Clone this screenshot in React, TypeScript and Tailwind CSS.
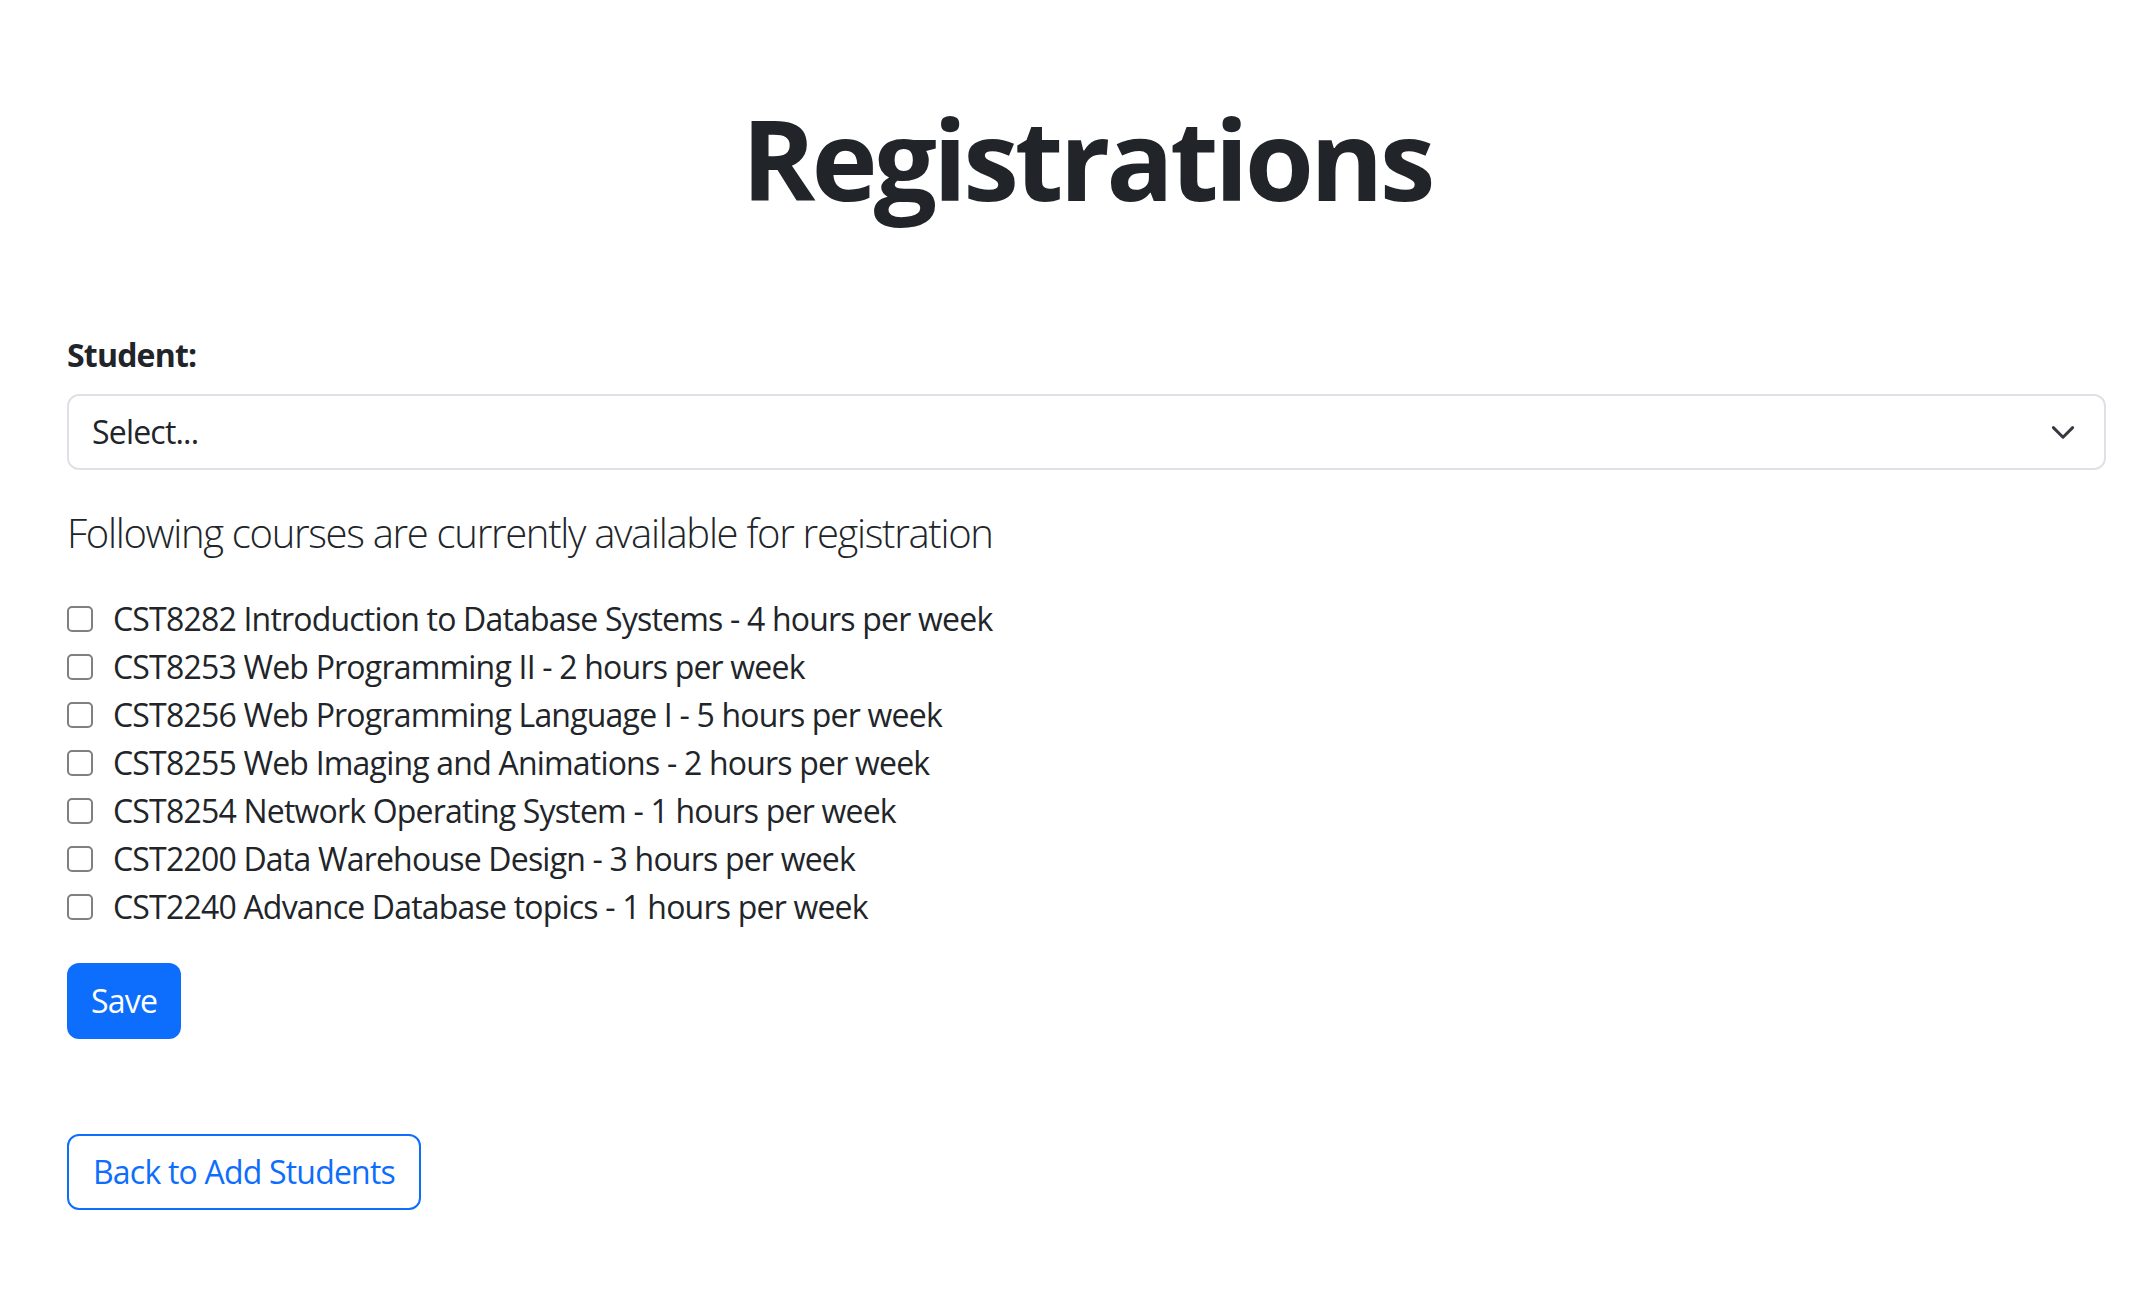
import React from "react";

const courses = [
  "CST8282 Introduction to Database Systems - 4 hours per week",
  "CST8253 Web Programming II - 2 hours per week",
  "CST8256 Web Programming Language I - 5 hours per week",
  "CST8255 Web Imaging and Animations - 2 hours per week",
  "CST8254 Network Operating System - 1 hours per week",
  "CST2200 Data Warehouse Design - 3 hours per week",
  "CST2240 Advance Database topics - 1 hours per week",
];

function Chevron() {
  return (
    <svg viewBox="0 0 16 16" className="w-[28px] h-[28px]" fill="none">
      <path
        d="M2.5 5.5l5.5 5.5 5.5-5.5"
        stroke="#343a40"
        strokeWidth="1.7"
        strokeLinecap="round"
        strokeLinejoin="round"
      />
    </svg>
  );
}

export default function App() {
  return (
    <div className="min-h-screen bg-white text-[#212529] font-['Open_Sans',sans-serif] pl-[67px] pr-[26px]">
      <h1 className="pt-[88px] text-center text-[112px] leading-[140px] font-bold tracking-[-4px]">
        Registrations
      </h1>

      <form className="mt-[103px]">
        <label className="block text-[32px] leading-[48px] font-bold tracking-[-0.8px]">Student:</label>
        <div className="mt-[15px] h-[76px] rounded-[12px] border-2 border-[#dee2e6] flex items-center justify-between pl-[23px] pr-[27px] text-[32px] tracking-[-0.8px]">
          <span>Select...</span>
          <Chevron />
        </div>

        <p className="mt-[33px] text-[40px] leading-[60px] font-light tracking-[-1.3px]">
          Following courses are currently available for registration
        </p>

        <div className="mt-[32px] flex flex-col">
          {courses.map((c) => (
            <label key={c} className="flex items-center h-[48px] text-[32px] leading-[48px] tracking-[-0.8px]">
              <span className="w-[26px] h-[26px] rounded-[5px] border-2 border-[#808080] bg-white" />
              <span className="ml-[20px]">{c}</span>
            </label>
          ))}
        </div>

        <button
          type="button"
          className="mt-[32px] h-[76px] px-[24px] rounded-[12px] bg-[#0d6efd] text-white text-[32px] tracking-[-0.8px]"
        >
          Save
        </button>
      </form>

      <div className="mt-[95px]">
        <a className="inline-flex items-center h-[76px] px-[24px] rounded-[12px] border-2 border-[#0d6efd] text-[#0d6efd] text-[32px] tracking-[-0.8px]">
          Back to Add Students
        </a>
      </div>
    </div>
  );
}
